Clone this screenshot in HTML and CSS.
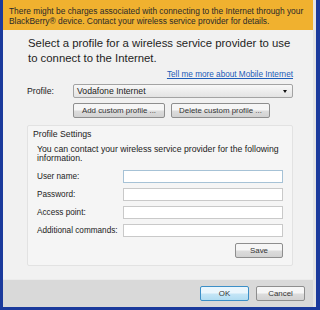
FILE: index.html
```html
<!DOCTYPE html>
<html>
<head>
    <title>Mobile Internet</title>
    <link rel="stylesheet" href="styles.css">
</head>
<body>
    <div class="dialog">
        <div class="banner">
            There might be charges associated with connecting to the Internet through your
            BlackBerry&reg; device. Contact your wireless service provider for details.
        </div>

        <div class="content">
            <h2>Select a profile for a wireless service provider to use to connect to the Internet.</h2>
            <div class="link-row">
                <a href="#">Tell me more about Mobile Internet</a>
            </div>

            <div class="profile-row">
                <span class="label">Profile:</span>
                <div class="select">
                    <span>Vodafone Internet</span>
                    <span class="arrow"></span>
                </div>
            </div>
            <div class="profile-buttons">
                <button class="btn add-btn">Add custom profile ...</button>
                <button class="btn delete-btn">Delete custom profile ...</button>
            </div>

            <div class="group">
                <div class="group-title">Profile Settings</div>
                <p>You can contact your wireless service provider for the following information.</p>
                <div class="field">
                    <label>User name:</label>
                    <input type="text" class="focused">
                </div>
                <div class="field">
                    <label>Password:</label>
                    <input type="password">
                </div>
                <div class="field">
                    <label>Access point:</label>
                    <input type="text">
                </div>
                <div class="field">
                    <label>Additional commands:</label>
                    <input type="text">
                </div>
                <div class="save-row">
                    <button class="btn save-btn">Save</button>
                </div>
            </div>
        </div>

        <div class="footer">
            <button class="btn ok-btn">OK</button>
            <button class="btn cancel-btn">Cancel</button>
        </div>
    </div>
</body>
</html>
```

FILE: styles.css
```css
body {
    margin: 0;
    padding: 0 4px 3px 3px;
    background-color: #1b3a9c;
    font-family: "Liberation Sans", Arial, sans-serif;
    font-size: 8.7px;
    color: #222;
    height: 310px;
    box-sizing: border-box;
    overflow: hidden;
}

.dialog {
    height: 307px;
    background-color: #f1f1f1;
    display: flex;
    flex-direction: column;
    border-right: 3px solid #e4e4e4;
}

.banner {
    background-color: #f0b12f;
    height: 30px;
    flex-shrink: 0;
    box-sizing: border-box;
    padding: 6px 6px 0 6px;
    font-size: 8.4px;
    line-height: 10px;
    color: #2a2a2a;
}

.content {
    flex: 1;
    padding: 6px 20px 0 24px;
}

h2 {
    font-size: 11.35px;
    font-weight: normal;
    line-height: 15px;
    margin: 0 0 0 1px;
    color: #1e1e1e;
}

.link-row {
    text-align: right;
    margin-top: 3px;
    line-height: 10px;
}

.link-row a {
    color: #1c5cb8;
    font-size: 8.2px;
    text-decoration: underline;
}

.profile-row {
    display: flex;
    align-items: center;
    margin-top: 4px;
}

.label {
    width: 46px;
    flex-shrink: 0;
}

.select {
    flex: 1;
    height: 14px;
    box-sizing: border-box;
    border: 1px solid #a3a3a3;
    border-radius: 2px;
    background: linear-gradient(#f8f8f8, #e3e3e3);
    display: flex;
    align-items: center;
    justify-content: space-between;
    padding: 0 5px 0 3px;
}

.arrow {
    width: 0;
    height: 0;
    border-left: 2px solid transparent;
    border-right: 2px solid transparent;
    border-top: 3px solid #111;
}

.profile-buttons {
    display: flex;
    gap: 6px;
    margin: 5px 0 0 46px;
}

.btn {
    font-family: "Liberation Sans", Arial, sans-serif;
    font-size: 7.9px;
    color: #333;
    height: 15px;
    padding: 0;
    border: 1px solid #8e8e8e;
    border-radius: 2px;
    background: linear-gradient(#f6f6f6 45%, #dcdcdc 55%, #d2d2d2);
    white-space: nowrap;
}

.add-btn {
    width: 92px;
}

.delete-btn {
    width: 99px;
}

.group {
    margin-top: 7px;
    border: 1px solid #e2e2e2;
    border-radius: 2px;
    background-color: #f5f5f5;
    padding: 3px 9px 7px 9px;
}

.group-title {
    line-height: 10px;
    margin-left: -4px;
}

.group p {
    margin: 6px 0 0 0;
    line-height: 9px;
}

.field {
    display: flex;
    align-items: center;
    margin-top: 5px;
}

.group p + .field {
    margin-top: 7px;
}

.field label {
    width: 86px;
    flex-shrink: 0;
    white-space: nowrap;
    font-size: 8.2px;
}

.field input {
    flex: 1;
    min-width: 0;
    width: 0;
    height: 13px;
    box-sizing: border-box;
    border: 1px solid #c9c9c9;
    background-color: #fff;
    margin: 0;
    padding: 0;
}

.field input.focused {
    border-color: #a6c2d6;
}

.save-row {
    display: flex;
    justify-content: flex-end;
    margin-top: 6px;
}

.save-btn {
    width: 48px;
}

.footer {
    height: 28px;
    flex-shrink: 0;
    box-sizing: border-box;
    background-color: #d9d9d9;
    border-top: 1px solid #ececec;
    display: flex;
    justify-content: flex-end;
    align-items: center;
    gap: 7px;
    padding-right: 8px;
}

.ok-btn,
.cancel-btn {
    width: 49px;
}

.ok-btn {
    border-color: #3c8fc7;
    background: linear-gradient(#eaf6fd 45%, #c4e5f6 55%, #b0dcf2);
}
```
